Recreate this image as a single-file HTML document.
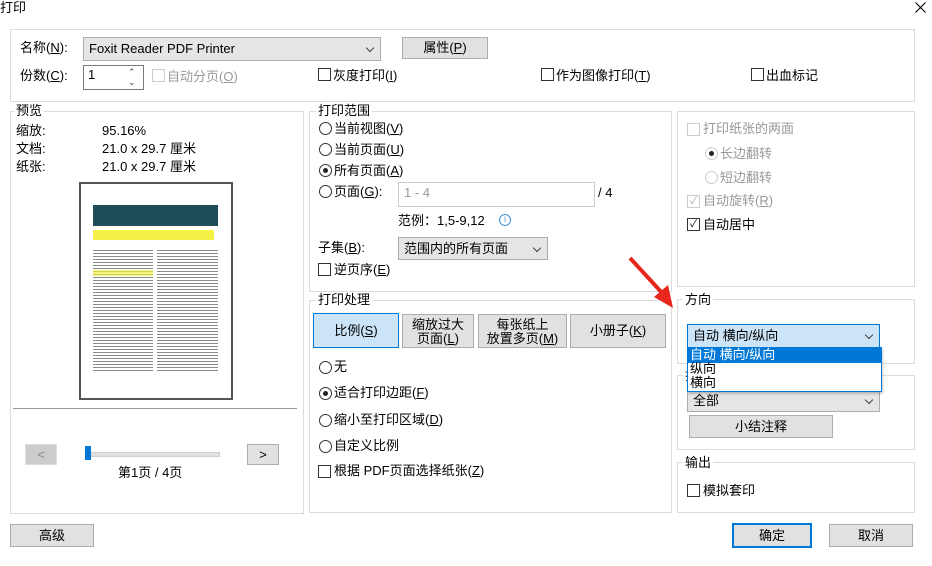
<!DOCTYPE html>
<html><head><meta charset="utf-8"><style>
body{margin:0;width:932px;height:566px;background:#fff;position:relative;overflow:hidden;font-family:"Liberation Sans","Noto Sans CJK SC",sans-serif;font-size:13px;color:#000}
.a{position:absolute}
.t{position:absolute;line-height:16px;white-space:nowrap}
.g{position:absolute;border:1px solid #dcdcdc}
.gl{position:absolute;background:#fff;padding:0 2px;line-height:16px}
.cb{position:absolute;width:11px;height:11px;border:1px solid #333;background:#fff}
.cb.d{border-color:#ccc}
.rb{position:absolute;width:11px;height:11px;border:1px solid #333;border-radius:50%;background:#fff}
.rb.on::after{content:"";position:absolute;left:3px;top:3px;width:5px;height:5px;border-radius:50%;background:#222}
.btn{position:absolute;background:#e1e1e1;border:1px solid #adadad;text-align:center;box-sizing:border-box}
.sel{position:absolute;background:#e5e5e5;border:1px solid #adadad;box-sizing:border-box;padding-left:5px;line-height:21px}
.chev{position:absolute;right:7px;top:8px;width:5px;height:5px;border-right:1px solid #444;border-bottom:1px solid #444;transform:rotate(45deg)}
u{text-decoration:underline}
.gr{color:#999}
</style></head><body>
<div class="t" style="left:0;top:0">打印</div>
<svg class="a" style="left:915px;top:2px" width="11" height="11"><path d="M0.5 0.5L10.5 10.5M10.5 0.5L0.5 10.5" stroke="#000" stroke-width="1.1"/></svg>

<div class="g" style="left:10px;top:29px;width:903px;height:71px"></div>
<div class="t" style="left:20px;top:40px">名称(<u>N</u>):</div>
<div class="sel" style="left:83px;top:37px;width:298px;height:24px">Foxit Reader PDF Printer<span class="chev" style="top:7px"></span></div>
<div class="btn" style="left:402px;top:37px;width:86px;height:22px;line-height:20px">属性(<u>P</u>)</div>
<div class="t" style="left:20px;top:68px">份数(<u>C</u>):</div>
<div class="a" style="left:83px;top:65px;width:59px;height:23px;border:1px solid #7a7a7a"></div>
<div class="t" style="left:88px;top:67px">1</div>
<div class="t" style="left:128px;top:64px;font-size:9px;color:#444">⌃</div>
<div class="t" style="left:128px;top:74px;font-size:9px;color:#444">⌄</div>
<div class="cb d" style="left:152px;top:69px"></div><div class="t gr" style="left:167px;top:69px">自动分页(<u>O</u>)</div>
<div class="cb" style="left:318px;top:68px"></div><div class="t" style="left:333px;top:68px">灰度打印(<u>I</u>)</div>
<div class="cb" style="left:541px;top:68px"></div><div class="t" style="left:556px;top:68px">作为图像打印(<u>T</u>)</div>
<div class="cb" style="left:751px;top:68px"></div><div class="t" style="left:766px;top:68px">出血标记</div>

<!-- preview -->
<div class="g" style="left:10px;top:111px;width:292px;height:401px"></div>
<div class="gl" style="left:14px;top:103px">预览</div>
<div class="t" style="left:16px;top:123px">缩放:</div><div class="t" style="left:102px;top:123px">95.16%</div>
<div class="t" style="left:16px;top:141px">文档:</div><div class="t" style="left:102px;top:141px">21.0 x 29.7 厘米</div>
<div class="t" style="left:16px;top:159px">纸张:</div><div class="t" style="left:102px;top:159px">21.0 x 29.7 厘米</div>
<div class="a" style="left:79px;top:182px;width:150px;height:214px;border:2px solid #555;background:#fff"></div>
<div class="a" style="left:93px;top:205px;width:125px;height:21px;background:#1f4e5a"></div>
<div class="a" style="left:93px;top:230px;width:121px;height:10px;background:#f4f046"></div>
<div class="a" style="left:93px;top:250px;width:60px;height:122px;background:repeating-linear-gradient(#888 0 1px,#fff 1px 3px)"></div>
<div class="a" style="left:157px;top:250px;width:61px;height:122px;background:repeating-linear-gradient(#888 0 1px,#fff 1px 3px)"></div>
<div class="a" style="left:93px;top:270px;width:60px;height:6px;background:#f4f046;opacity:.7"></div>
<div class="a" style="left:13px;top:408px;width:284px;height:1px;background:#999"></div>
<div class="btn" style="left:25px;top:444px;width:32px;height:21px;background:#ccc;border-color:#ddd;color:#888;line-height:19px">&lt;</div>
<div class="a" style="left:89px;top:452px;width:129px;height:3px;background:#e0e0e0;border:1px solid #d0d0d0"></div>
<div class="a" style="left:85px;top:446px;width:6px;height:14px;background:#0078d7"></div>
<div class="btn" style="left:247px;top:444px;width:32px;height:21px;line-height:19px">&gt;</div>
<div class="t" style="left:118px;top:465px">第1页 / 4页</div>

<!-- print range -->
<div class="g" style="left:309px;top:111px;width:361px;height:179px"></div>
<div class="gl" style="left:316px;top:103px">打印范围</div>
<div class="rb" style="left:319px;top:122px"></div><div class="t" style="left:334px;top:121px">当前视图(<u>V</u>)</div>
<div class="rb" style="left:319px;top:143px"></div><div class="t" style="left:334px;top:142px">当前页面(<u>U</u>)</div>
<div class="rb on" style="left:319px;top:164px"></div><div class="t" style="left:334px;top:163px">所有页面(<u>A</u>)</div>
<div class="rb" style="left:319px;top:185px"></div><div class="t" style="left:334px;top:184px">页面(<u>G</u>):</div>
<div class="a" style="left:398px;top:182px;width:195px;height:23px;border:1px solid #ccc"></div>
<div class="t gr" style="left:404px;top:185px">1 - 4</div>
<div class="t" style="left:598px;top:185px">/ 4</div>
<div class="t" style="left:398px;top:213px">范例：1,5-9,12</div>
<div class="a" style="left:499px;top:214px;width:10px;height:10px;border:1px solid #3c8fd8;border-radius:50%;font-size:8px;line-height:10px;text-align:center;color:#3c8fd8">i</div>
<div class="t" style="left:318px;top:240px">子集(<u>B</u>):</div>
<div class="sel" style="left:398px;top:237px;width:150px;height:23px">范围内的所有页面<span class="chev" style="top:7px"></span></div>
<div class="cb" style="left:318px;top:263px"></div><div class="t" style="left:334px;top:262px">逆页序(<u>E</u>)</div>

<!-- print handling -->
<div class="g" style="left:309px;top:300px;width:361px;height:211px"></div>
<div class="gl" style="left:316px;top:292px">打印处理</div>
<div class="btn" style="left:313px;top:313px;width:86px;height:35px;background:#cce4f7;border-color:#0078d7;line-height:33px">比例(<u>S</u>)</div>
<div class="btn" style="left:402px;top:314px;width:72px;height:34px;line-height:14px;padding-top:3px">缩放过大<br>页面(<u>L</u>)</div>
<div class="btn" style="left:478px;top:314px;width:89px;height:34px;line-height:14px;padding-top:3px">每张纸上<br>放置多页(<u>M</u>)</div>
<div class="btn" style="left:570px;top:314px;width:96px;height:34px;line-height:32px">小册子(<u>K</u>)</div>
<div class="rb" style="left:319px;top:361px"></div><div class="t" style="left:334px;top:359px">无</div>
<div class="rb on" style="left:319px;top:387px"></div><div class="t" style="left:334px;top:385px">适合打印边距(<u>F</u>)</div>
<div class="rb" style="left:319px;top:414px"></div><div class="t" style="left:334px;top:412px">缩小至打印区域(<u>D</u>)</div>
<div class="rb" style="left:319px;top:440px"></div><div class="t" style="left:334px;top:438px">自定义比例</div>
<div class="cb" style="left:318px;top:465px"></div><div class="t" style="left:334px;top:463px">根据 PDF页面选择纸张(<u>Z</u>)</div>

<!-- right top -->
<div class="g" style="left:677px;top:111px;width:236px;height:174px"></div>
<div class="cb d" style="left:687px;top:123px"></div><div class="t gr" style="left:703px;top:121px">打印纸张的两面</div>
<div class="rb on" style="left:705px;top:147px;border-color:#ccc"></div><div class="t gr" style="left:720px;top:146px">长边翻转</div>
<div class="rb" style="left:705px;top:171px;border-color:#ccc"></div><div class="t gr" style="left:720px;top:170px">短边翻转</div>
<div class="cb d" style="left:687px;top:195px;font-size:10px;line-height:11px;color:#aaa;text-align:center">✓</div><div class="t gr" style="left:703px;top:193px">自动旋转(<u>R</u>)</div>
<div class="cb" style="left:687px;top:218px;font-size:10px;line-height:11px;text-align:center">✓</div><div class="t" style="left:703px;top:217px">自动居中</div>

<!-- direction -->
<div class="g" style="left:677px;top:299px;width:236px;height:63px"></div>
<div class="gl" style="left:683px;top:292px">方向</div>
<div class="g" style="left:677px;top:375px;width:236px;height:73px"></div>
<div class="gl" style="left:683px;top:368px">打</div>
<div class="sel" style="left:687px;top:389px;width:193px;height:23px">全部<span class="chev" style="top:7px"></span></div>
<div class="btn" style="left:689px;top:415px;width:144px;height:23px;line-height:21px">小结注释</div>
<div class="sel" style="left:687px;top:324px;width:193px;height:24px;background:#cce4f7;border-color:#0078d7">自动 横向/纵向<span class="chev" style="top:7px"></span></div>
<div class="a" style="left:687px;top:347px;width:193px;height:43px;border:1px solid #0078d7;background:#fff;box-shadow:1px 2px 2px rgba(0,0,0,.2)"></div>
<div class="a" style="left:688px;top:348px;width:193px;height:15px;background:#0078d7"></div>
<div class="t" style="left:690px;top:347px;color:#fff;line-height:16px">自动 横向/纵向</div>
<div class="t" style="left:690px;top:362px;line-height:14px">纵向</div>
<div class="t" style="left:690px;top:376px;line-height:14px">横向</div>

<!-- output -->
<div class="g" style="left:677px;top:462px;width:236px;height:49px"></div>
<div class="gl" style="left:683px;top:455px">输出</div>
<div class="cb" style="left:687px;top:484px"></div><div class="t" style="left:703px;top:483px">模拟套印</div>

<div class="btn" style="left:10px;top:524px;width:84px;height:23px;line-height:21px">高级</div>
<div class="btn" style="left:732px;top:523px;width:80px;height:25px;border:2px solid #0078d7;line-height:21px">确定</div>
<div class="btn" style="left:829px;top:524px;width:84px;height:23px;line-height:21px">取消</div>

<svg class="a" style="left:620px;top:250px" width="60" height="65"><line x1="10" y1="8" x2="44" y2="45" stroke="#e8261c" stroke-width="4"/><polygon points="53,58 34,47 48,35" fill="#e8261c"/></svg>
</body></html>
